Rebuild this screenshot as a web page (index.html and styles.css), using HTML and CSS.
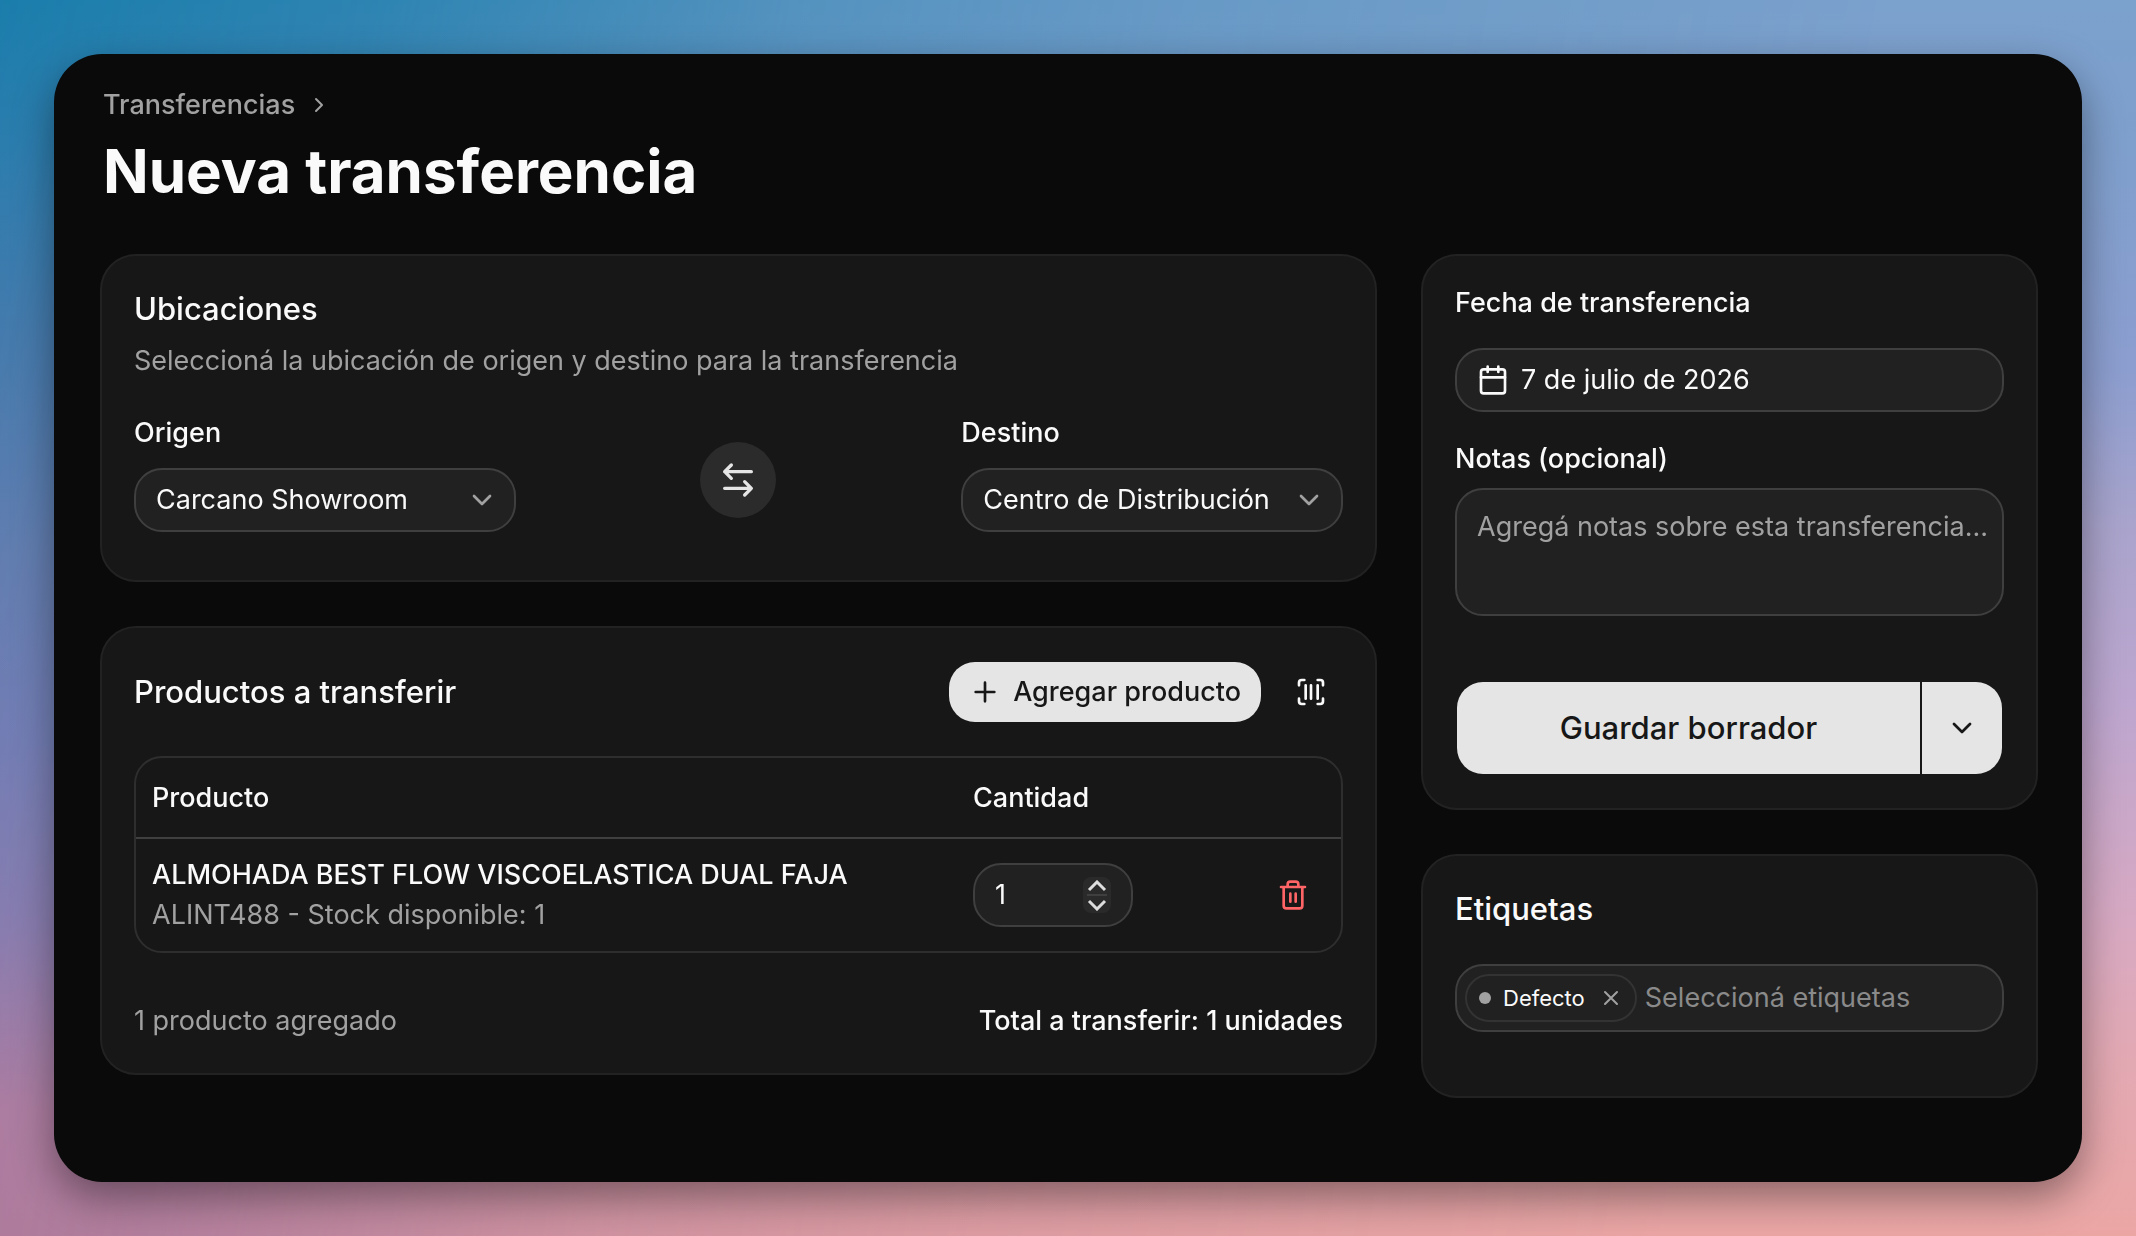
FILE: index.html
```html
<!DOCTYPE html>
<html lang="es">
<head>
<meta charset="utf-8">
<meta name="viewport" content="width=device-width, initial-scale=1">
<title>Nueva transferencia</title>
<link rel="stylesheet" href="styles.css">
</head>
<body>
<main class="window">
  <header class="page-header">
    <nav class="breadcrumb" aria-label="Ruta">
      <a href="#">Transferencias</a>
      <svg class="icon icon-sm" viewBox="0 0 24 24" aria-hidden="true"><path d="m9 18 6-6-6-6"/></svg>
    </nav>
    <h1>Nueva transferencia</h1>
  </header>

  <div class="columns">
    <div class="column">
      <section class="card locations">
        <h2>Ubicaciones</h2>
        <p class="muted">Seleccioná la ubicación de origen y destino para la transferencia</p>
        <div class="route">
          <div class="field">
            <label for="origin">Origen</label>
            <div class="select">
              <select id="origin" class="control"><option>Carcano Showroom</option></select>
              <svg class="icon" viewBox="0 0 24 24" aria-hidden="true"><path d="m6 9 6 6 6-6"/></svg>
            </div>
          </div>
          <button class="swap" type="button" aria-label="Intercambiar ubicaciones">
            <svg class="icon icon-lg" viewBox="0 0 24 24" aria-hidden="true"><path d="M8 3 4 7l4 4M4 7h16M16 21l4-4-4-4M20 17H4"/></svg>
          </button>
          <div class="field">
            <label for="target">Destino</label>
            <div class="select">
              <select id="target" class="control"><option>Centro de Distribución</option></select>
              <svg class="icon" viewBox="0 0 24 24" aria-hidden="true"><path d="m6 9 6 6 6-6"/></svg>
            </div>
          </div>
        </div>
      </section>

      <section class="card">
        <div class="card-head">
          <h2>Productos a transferir</h2>
          <div class="actions">
            <button class="add" type="button">
              <svg class="icon" viewBox="0 0 24 24" aria-hidden="true"><path d="M5 12h14M12 5v14"/></svg>
              Agregar producto
            </button>
            <button class="ghost" type="button" aria-label="Escanear código">
              <svg class="icon" viewBox="0 0 24 24" aria-hidden="true"><path d="M3 7V5a2 2 0 0 1 2-2h2M17 3h2a2 2 0 0 1 2 2v2M21 17v2a2 2 0 0 1-2 2h-2M7 21H5a2 2 0 0 1-2-2v-2M8 7v10M12 7v10M17 7v10"/></svg>
            </button>
          </div>
        </div>
        <div class="table-frame">
          <table>
            <thead>
              <tr><th>Producto</th><th class="col-qty">Cantidad</th><th class="col-action"></th></tr>
            </thead>
            <tbody>
              <tr>
                <td>
                  <div class="product-name">ALMOHADA BEST FLOW VISCOELASTICA DUAL FAJA</div>
                  <div class="muted">ALINT488 - Stock disponible: 1</div>
                </td>
                <td>
                  <div class="control quantity">
                    <input type="number" value="1" aria-label="Cantidad">
                    <div class="stepper">
                      <button type="button" aria-label="Aumentar"><svg viewBox="0 0 20 12" aria-hidden="true"><path d="m2 10 8-8 8 8"/></svg></button>
                      <button type="button" aria-label="Disminuir"><svg viewBox="0 0 20 12" aria-hidden="true"><path d="m2 2 8 8 8-8"/></svg></button>
                    </div>
                  </div>
                </td>
                <td>
                  <button class="ghost danger" type="button" aria-label="Eliminar producto">
                    <svg class="icon" viewBox="0 0 24 24" aria-hidden="true"><path d="M3 6h18M19 6v14a2 2 0 0 1-2 2H7a2 2 0 0 1-2-2V6M8 6V4a2 2 0 0 1 2-2h4a2 2 0 0 1 2 2v2M10 11v6M14 11v6"/></svg>
                  </button>
                </td>
              </tr>
            </tbody>
          </table>
        </div>
        <div class="summary">
          <span class="muted">1 producto agregado</span>
          <strong>Total a transferir: 1 unidades</strong>
        </div>
      </section>
    </div>

    <aside class="column">
      <section class="card details">
        <label for="date">Fecha de transferencia</label>
        <button id="date" class="control date" type="button">
          <svg class="icon" viewBox="0 0 24 24" aria-hidden="true"><path d="M8 2v4M16 2v4M3 10h18"/><rect x="3" y="4" width="18" height="18" rx="2"/></svg>
          7 de julio de 2026
        </button>
        <label for="notes">Notas (opcional)</label>
        <textarea id="notes" class="control" placeholder="Agregá notas sobre esta transferencia..."></textarea>
        <div class="split">
          <button class="save" type="button">Guardar borrador</button>
          <button class="more" type="button" aria-label="Más opciones">
            <svg class="icon" viewBox="0 0 24 24" aria-hidden="true"><path d="m6 9 6 6 6-6"/></svg>
          </button>
        </div>
      </section>

      <section class="card tags">
        <h2><label for="tags">Etiquetas</label></h2>
        <div class="control tag-box">
          <span class="tag">
            <i class="dot"></i>Defecto
            <button type="button" aria-label="Quitar Defecto"><svg class="icon icon-sm" viewBox="0 0 24 24" aria-hidden="true"><path d="M18 6 6 18M6 6l12 12"/></svg></button>
          </span>
          <input id="tags" type="text" placeholder="Seleccioná etiquetas">
        </div>
      </section>
    </aside>
  </div>
</main>
</body>
</html>
```
FILE: styles.css
```css
* { box-sizing: border-box; }

:root {
  --fg: #fafafa;
  --muted: #a1a1a1;
  --primary: #e5e5e5;
  --on-primary: #171717;
  --line: #3f3f3f;
  --field: #212121;
}

body {
  margin: 0;
  min-height: 100vh;
  padding: 54px;
  display: flex;
  background: linear-gradient(180deg, #7ba1cd 0%, #7f9fcc 12%, #8c9ecf 30%, #aaa4cc 43%, #bda6cf 57%, #d8a9c2 75%, #e2a9b4 85%, #eba6a4 100%);
  color: var(--fg);
  font: 400 27px/40px Inter, "Liberation Sans", sans-serif;
}

/* cool left side of the backdrop, fading into the warm right side */
body::before {
  content: "";
  position: fixed;
  inset: 0;
  z-index: -1;
  background: linear-gradient(180deg, #1a7dab 0%, #2a7cad 12%, #4279ab 27%, #5d7bae 45%, #6c7ab2 60%, #8078ad 75%, #a5779f 90%, #a5759b 100%);
  mask-image: linear-gradient(100deg, #000 0%, #000c 16%, #0006 34%, #0003 50%, #0000 80%);
}

h1, h2, p { margin: 0; }
h1 { font-size: 60px; line-height: 72px; font-weight: 700; }
h2 { font-size: 31px; line-height: 42px; font-weight: 500; }
label { font-weight: 500; line-height: 36px; }
button, input, select, textarea { font: inherit; color: inherit; }
button { border: 0; padding: 0; background: none; cursor: pointer; display: flex; align-items: center; justify-content: center; }

.icon { width: 32px; height: 32px; flex: none; fill: none; stroke: currentColor; stroke-width: 2; stroke-linecap: round; stroke-linejoin: round; }
.icon-sm { width: 24px; height: 24px; }
.icon-lg { width: 40px; height: 40px; }
.muted { color: var(--muted); }

.window {
  flex: 1;
  min-width: 0;
  padding: 31px 44px 40px 46px;
  border-radius: 48px;
  background: #0a0a0a;
  box-shadow: 0 16px 40px #0006;
}
.page-header { padding: 0 3px; }
.breadcrumb { display: flex; align-items: center; gap: 12px; color: var(--muted); font-weight: 500; }
.breadcrumb a { color: inherit; text-decoration: none; }
.page-header h1 { margin: 10px 0 47px; }

.columns { display: grid; grid-template-columns: minmax(0, 1277fr) minmax(0, 617fr); gap: 44px; align-items: start; }
.column { display: grid; grid-template-columns: minmax(0, 1fr); gap: 44px; }
.card { padding: 32px; border: 2px solid #222; border-radius: 36px; background: #171717; }

.control { width: 100%; min-height: 64px; border: 2px solid var(--line); border-radius: 28px; background: var(--field); outline: 0; }

.locations { padding-bottom: 48px; }
.locations > p { margin-top: 11px; }
.route { display: grid; grid-template-columns: repeat(3, minmax(0, 1fr)); gap: 32px; align-items: end; margin-top: 34px; }
.field { display: grid; gap: 17px; }
.select { display: grid; align-items: center; }
.select > * { grid-area: 1 / 1; }
.select .control { appearance: none; height: 64px; padding: 0 56px 0 20px; }
.select .icon { justify-self: end; margin-right: 18px; color: var(--muted); pointer-events: none; }
.swap { width: 76px; height: 76px; margin-bottom: 14px; justify-self: center; border-radius: 50%; background: #2b2b2b; color: var(--primary); }

.card-head { display: flex; align-items: center; justify-content: space-between; padding: 2px 0 34px; }
.actions { display: flex; align-items: center; gap: 18px; }
.add { height: 60px; gap: 12px; padding: 0 20px; border-radius: 26px; background: var(--primary); color: var(--on-primary); font-weight: 500; }
.ghost { width: 64px; height: 60px; }
.danger { color: #ff6467; }

.table-frame { border: 2px solid #2e2e2e; border-radius: 28px; overflow: hidden; }
table { width: 100%; border-collapse: separate; border-spacing: 0; table-layout: fixed; text-align: left; }
th { height: 81px; padding: 0 16px; font-weight: 500; border-bottom: 2px solid var(--line); }
td { height: 112px; padding: 0 16px; }
.col-qty { width: 288px; }
.col-action { width: 96px; }
.product-name { font-weight: 500; white-space: nowrap; }
.quantity { width: 160px; height: 64px; display: flex; align-items: center; justify-content: space-between; padding: 0 20px; }
.quantity input { width: 60px; padding: 0; border: 0; outline: 0; background: none; appearance: textfield; }
.quantity input::-webkit-inner-spin-button { display: none; }
.stepper { width: 28px; padding: 0 4px; border-radius: 8px; background: #2a2a2a; }
.stepper button { width: 20px; height: 17px; }
.stepper button + button { border-top: 2px solid var(--line); height: 19px; }
.stepper svg { width: 20px; height: 12px; fill: none; stroke: #ddd; stroke-width: 3; }

.summary { display: flex; justify-content: space-between; margin-top: 48px; }
.summary strong { font-weight: 500; }

.details { display: grid; grid-template-columns: minmax(0, 1fr); padding-top: 29px; padding-bottom: 34px; }
.date { margin: 27px 0 29px; height: 64px; justify-content: flex-start; gap: 12px; padding: 0 20px; }
textarea.control { display: block; height: 128px; margin-top: 11px; padding: 17px 12px 17px 20px; resize: none; white-space: nowrap; overflow: hidden; }
::placeholder { color: var(--muted); opacity: 1; }
.split { display: flex; gap: 2px; margin: 66px 2px 0; border-radius: 26px; overflow: hidden; }
.split button { height: 92px; background: var(--primary); color: var(--on-primary); }
.save { flex: 1; font-size: 31px; font-weight: 500; }
.more { width: 80px; }

.tags { padding-bottom: 64px; }
.tag-box { display: flex; align-items: center; gap: 8px; min-height: 68px; margin-top: 34px; padding: 0 8px; }
.tag { display: flex; align-items: center; height: 48px; padding: 0 12px; border: 2px solid #333; border-radius: 24px; font-size: 22px; }
.dot { width: 12px; height: 12px; margin-right: 12px; border-radius: 50%; background: var(--muted); }
.tag button { margin-left: 14px; color: var(--muted); }
.tag-box input { flex: 1; min-width: 0; padding: 0; border: 0; outline: 0; background: none; }
.tag-box input::placeholder { color: #8a8a8a; }
```
